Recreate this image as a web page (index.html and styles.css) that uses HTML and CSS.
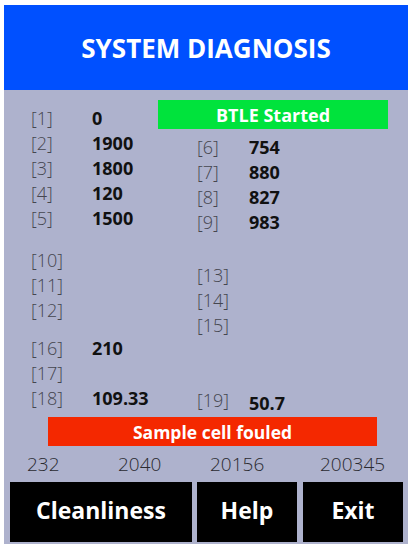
FILE: index.html
```html
<!DOCTYPE html>
<html>
<head>
<meta charset="utf-8">
<link rel="stylesheet" href="styles.css">
</head>
<body>
<div class="frame">
  <header class="title">SYSTEM DIAGNOSIS</header>
  <main class="panel">
    <section class="data">
      <div class="col-left">
        <div class="row"><span class="lbl">[1]</span><span class="val">0</span></div>
        <div class="row"><span class="lbl">[2]</span><span class="val">1900</span></div>
        <div class="row"><span class="lbl">[3]</span><span class="val">1800</span></div>
        <div class="row"><span class="lbl">[4]</span><span class="val">120</span></div>
        <div class="row"><span class="lbl">[5]</span><span class="val">1500</span></div>
        <div class="row gap-a"><span class="lbl">[10]</span><span class="val"></span></div>
        <div class="row"><span class="lbl">[11]</span><span class="val"></span></div>
        <div class="row"><span class="lbl">[12]</span><span class="val"></span></div>
        <div class="row gap-b"><span class="lbl">[16]</span><span class="val">210</span></div>
        <div class="row"><span class="lbl">[17]</span><span class="val"></span></div>
        <div class="row"><span class="lbl">[18]</span><span class="val">109.33</span></div>
      </div>
      <div class="col-right">
        <div class="status ok">BTLE Started</div>
        <div class="rows-r">
          <div class="row"><span class="lbl">[6]</span><span class="val">754</span></div>
          <div class="row"><span class="lbl">[7]</span><span class="val">880</span></div>
          <div class="row"><span class="lbl">[8]</span><span class="val">827</span></div>
          <div class="row"><span class="lbl">[9]</span><span class="val">983</span></div>
          <div class="row gap-c"><span class="lbl">[13]</span><span class="val"></span></div>
          <div class="row"><span class="lbl">[14]</span><span class="val"></span></div>
          <div class="row"><span class="lbl">[15]</span><span class="val"></span></div>
          <div class="row gap-d"><span class="lbl">[19]</span><span class="val low">50.7</span></div>
        </div>
      </div>
    </section>
    <div class="status bad">Sample cell fouled</div>
    <div class="counts">
      <span>232</span><span>2040</span><span>20156</span><span>200345</span>
    </div>
    <nav class="buttons">
      <button class="btn wide">Cleanliness</button>
      <button class="btn">Help</button>
      <button class="btn">Exit</button>
    </nav>
  </main>
</div>
</body>
</html>
```
FILE: styles.css
```css
html, body {
  margin: 0;
  padding: 0;
  background: #ffffff;
}
.frame {
  margin: 5px 6px 5px 4px;
  width: 404px;
  font-family: "Open Sans", "DejaVu Sans", sans-serif;
}
.title {
  height: 85px;
  background: #0050ff;
  color: #ffffff;
  font-weight: 700;
  font-size: 26px;
  display: flex;
  align-items: center;
  justify-content: center;
  padding-top: 1px;
  box-sizing: border-box;
}
.panel {
  background: #aeb2cd;
  display: flex;
  flex-direction: column;
  padding: 10px 5px 2px 0;
  height: 454px;
  box-sizing: border-box;
}
.data {
  display: flex;
  height: 312.5px;
}
.col-left {
  width: 154px;
  padding: 5.5px 0 0 27px;
  box-sizing: border-box;
}
.col-right {
  width: 230px;
}
.rows-r {
  padding: 5.5px 0 0 39px;
}
.row {
  display: flex;
  align-items: center;
  height: 25px;
}
.lbl {
  width: 61px;
  font-weight: 300;
  font-size: 18px;
  color: #45464f;
}
.rows-r .lbl {
  width: 52px;
}
.val {
  font-weight: 700;
  font-size: 18px;
  color: #111111;
}
.val.low {
  position: relative;
  top: 3px;
}
.gap-a { margin-top: 17px; }
.gap-b { margin-top: 13px; }
.gap-c { margin-top: 28px; }
.gap-d { margin-top: 50px; }
.status {
  height: 29px;
  display: flex;
  align-items: center;
  justify-content: center;
  color: #ffffff;
  font-weight: 700;
  font-size: 17.5px;
}
.status.ok {
  background: #00e33c;
  font-size: 18px;
}
.status.bad {
  background: #f42800;
  width: 329px;
  margin: 4.5px 0 0 44px;
}
.counts {
  height: 36px;
  display: grid;
  grid-template-columns: 91px 92px 110px auto;
  align-items: center;
  padding-left: 23px;
  font-weight: 300;
  font-size: 19px;
  color: #2a2a30;
}
.buttons {
  display: flex;
  height: 60px;
  padding-left: 6px;
}
.btn {
  background: #000000;
  color: #ffffff;
  border: none;
  margin: 0;
  padding: 0 0 4px 0;
  font-family: "Open Sans", "DejaVu Sans", sans-serif;
  font-weight: 700;
  font-size: 23px;
  width: 100px;
  height: 60px;
}
.btn.wide {
  width: 182px;
  margin-right: 5px;
}
.btn + .btn {
  margin-left: 6px;
}
.btn.wide + .btn {
  margin-left: 0;
}
```
